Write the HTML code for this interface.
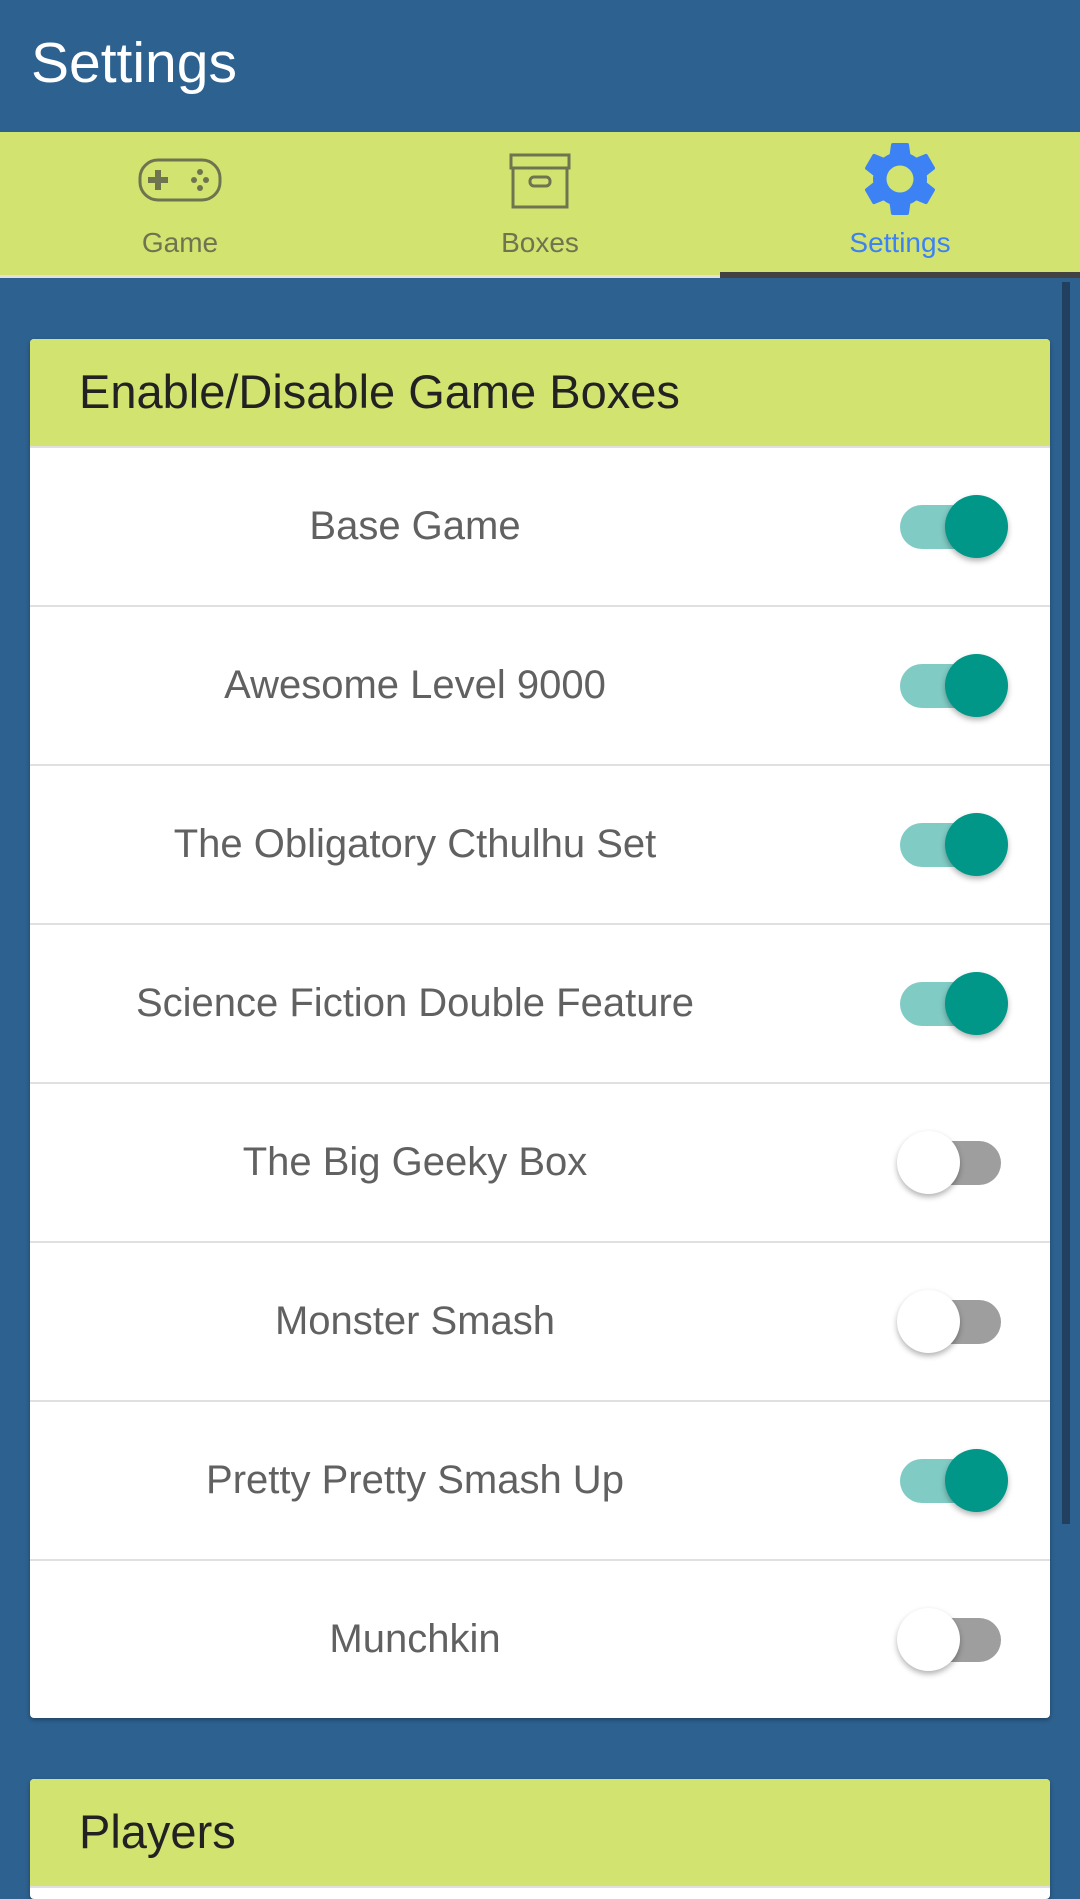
<!DOCTYPE html>
<html><head><meta charset="utf-8"><style>
*{box-sizing:border-box;margin:0;padding:0}
body{width:1080px;height:1845px;overflow:hidden;background:#2d618f;font-family:"Liberation Sans",Roboto,sans-serif;position:relative}
.top{position:absolute;left:0;top:0;width:1080px;height:132px;background:#2d618f;color:#fff;font-size:57px;padding:30px 0 0 31px}
.tabs{position:absolute;left:0;top:132px;width:1080px;height:146px;background:#d2e36f}
.tab{position:absolute;top:0;width:360px;height:146px;text-align:center}
.tab .lbl{position:absolute;left:0;right:0;top:95px;font-size:28px;color:#6f7450}
.tab svg{position:absolute;left:50%;top:26px;transform:translateX(-50%)}
.ul1{position:absolute;left:0;top:275px;width:720px;height:3px;background:#e0e0e0}
.ul2{position:absolute;left:720px;top:272px;width:360px;height:6px;background:#424242}
.sb{position:absolute;left:1062px;top:282px;width:8px;height:1242px;background:#21405f}
.card{position:absolute;left:30px;width:1020px;background:#fff;border-radius:4px;overflow:hidden;box-shadow:0 2px 4px rgba(0,0,0,.3)}
.hd{height:109px;background:#d2e36f;font-size:47px;color:#222;padding:25px 0 0 49px;border-bottom:2px solid #e0e0e0}
.row{height:159px;border-bottom:2px solid #e0e0e0;position:relative}
.row:last-child{border-bottom:none}
.row .t{position:absolute;left:0;width:770px;top:0;line-height:157px;text-align:center;font-size:40px;color:#616161}
.tr{position:absolute;left:870px;top:57px;width:101px;height:44px;border-radius:22px}
.on .tr{background:#80cbc4}.off .tr{background:#9e9e9e}
.th{position:absolute;top:47px;width:63px;height:63px;border-radius:50%;box-shadow:0 3px 6px rgba(0,0,0,.3)}
.on .th{left:915px;background:#009688}.off .th{left:867px;background:#fff}
</style></head><body>
<div class="top">Settings</div>
<div class="tabs">
 <div class="tab" style="left:0"><svg width="84" height="44" viewBox="0 0 84 44"><rect x="2" y="2" width="80" height="40" rx="18" fill="none" stroke="#6f7450" stroke-width="3"/><rect x="10" y="19" width="20" height="6" fill="#6f7450"/><rect x="17" y="12" width="6" height="20" fill="#6f7450"/><circle cx="62" cy="14" r="3" fill="#6f7450"/><circle cx="56" cy="22" r="3" fill="#6f7450"/><circle cx="68" cy="22" r="3" fill="#6f7450"/><circle cx="62" cy="30" r="3" fill="#6f7450"/></svg><div class="lbl">Game</div></div>
 <div class="tab" style="left:360px"><svg width="62" height="56" viewBox="0 0 62 56" style="top:21px"><rect x="2" y="2" width="58" height="13" fill="none" stroke="#6f7450" stroke-width="3"/><rect x="4" y="15" width="54" height="39" fill="none" stroke="#6f7450" stroke-width="3"/><rect x="21" y="24" width="20" height="9" rx="4" fill="none" stroke="#6f7450" stroke-width="3"/></svg><div class="lbl">Boxes</div></div>
 <div class="tab" style="left:720px"><svg width="90" height="90" viewBox="0 0 24 24" style="top:2px"><path fill="#3d82f5" d="M19.14 12.94c.04-.3.06-.61.06-.94 0-.32-.02-.64-.07-.94l2.03-1.58a.49.49 0 0 0 .12-.61l-1.92-3.32a.49.49 0 0 0-.59-.22l-2.39.96c-.5-.38-1.030-.7-1.62-.94l-.36-2.54a.48.48 0 0 0-.48-.41h-3.84c-.24 0-.43.17-.47.41l-.36 2.54c-.59.24-1.13.57-1.62.94l-2.39-.96a.48.48 0 0 0-.59.22L2.74 8.87c-.12.21-.08.47.12.61l2.03 1.58c-.05.3-.09.63-.09.94s.02.64.07.94l-2.03 1.58a.49.49 0 0 0-.12.61l1.92 3.32c.12.22.37.29.59.22l2.39-.96c.5.38 1.03.7 1.62.94l.36 2.54c.05.24.24.41.48.41h3.84c.24 0 .44-.17.47-.41l.36-2.54c.59-.24 1.13-.56 1.62-.94l2.39.96c.22.08.47 0 .59-.22l1.920-3.32c.12-.22.07-.47-.12-.61l-2.01-1.58zM12 15.6A3.6 3.6 0 1 1 12 8.4a3.6 3.6 0 0 1 0 7.2z"/></svg><div class="lbl" style="color:#3d82f5">Settings</div></div>
</div>
<div class="ul1"></div><div class="ul2"></div>
<div class="sb"></div>
<div class="card" style="top:339px;height:1379px">
 <div class="hd">Enable/Disable Game Boxes</div>
 <div class="row on"><div class="t">Base Game</div><div class="tr"></div><div class="th"></div></div>
 <div class="row on"><div class="t">Awesome Level 9000</div><div class="tr"></div><div class="th"></div></div>
 <div class="row on"><div class="t">The Obligatory Cthulhu Set</div><div class="tr"></div><div class="th"></div></div>
 <div class="row on"><div class="t">Science Fiction Double Feature</div><div class="tr"></div><div class="th"></div></div>
 <div class="row off"><div class="t">The Big Geeky Box</div><div class="tr"></div><div class="th"></div></div>
 <div class="row off"><div class="t">Monster Smash</div><div class="tr"></div><div class="th"></div></div>
 <div class="row on"><div class="t">Pretty Pretty Smash Up</div><div class="tr"></div><div class="th"></div></div>
 <div class="row off"><div class="t">Munchkin</div><div class="tr"></div><div class="th"></div></div>
</div>
<div class="card" style="top:1779px;height:120px"><div class="hd">Players</div></div>
</body></html>
